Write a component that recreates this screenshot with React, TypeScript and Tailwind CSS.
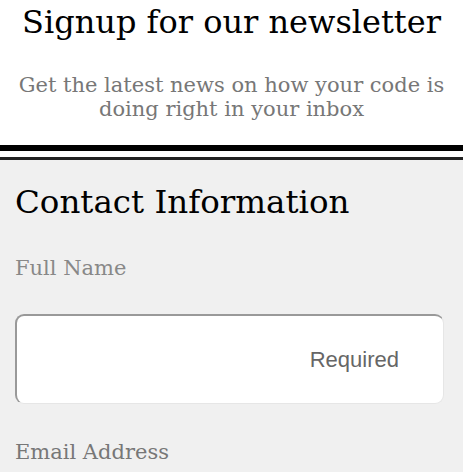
export default function App() {
  return (
    <div className="w-[463px] bg-white font-['DejaVu_Serif',serif]">
      <header className="pb-[24px] text-center">
        <h1 className="text-[32px] leading-[44px] text-black">Signup for our newsletter</h1>
        <p className="mx-auto mt-[29px] w-[440px] text-[21px] leading-[24px] text-[#777]">
          Get the latest news on how your code is doing right in your inbox
        </p>
      </header>
      <div className="h-[6px] bg-black" />
      <div className="h-[6px] bg-white" />
      <div className="h-[3px] bg-[#222]" />
      <section className="bg-[#f0f0f0] px-[15px] pt-[20px] pb-[20px]">
        <h2 className="text-[32.5px] leading-[44px] text-black">Contact Information</h2>
        <label className="mt-[31px] block text-[21px] leading-[26px] text-[#888]">Full Name</label>
        <div className="mt-[33px] flex h-[90px] w-[429px] items-center justify-end rounded-[9px] border-t-2 border-l-2 border-t-[#999] border-l-[#999] border-r border-b border-r-[#e6e6e6] border-b-[#e6e6e6] bg-white pr-[44px]">
          <span className="font-['Liberation_Sans',sans-serif] text-[22px] text-[#666]">Required</span>
        </div>
        <label className="mt-[35px] block text-[21px] leading-[26px] text-[#777]">Email Address</label>
      </section>
    </div>
  );
}
